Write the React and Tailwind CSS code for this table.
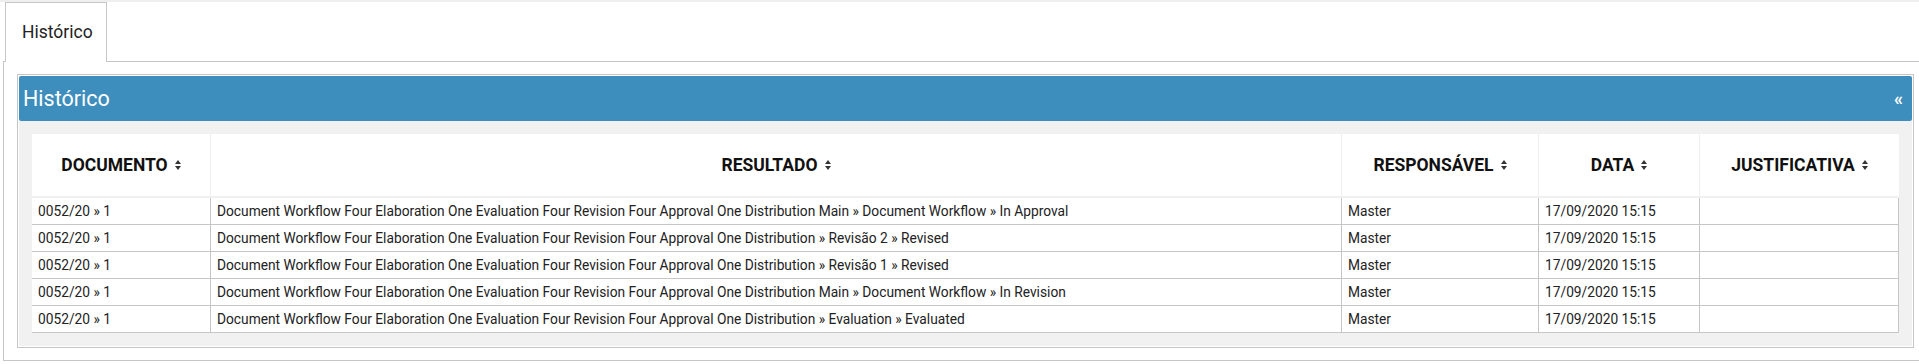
import React from 'react';

const BASE = 'Document Workflow Four Elaboration One Evaluation Four Revision Four Approval One Distribution';

const rows = [
  { doc: '0052/20 » 1', result: `${BASE} Main » Document Workflow » In Approval` },
  { doc: '0052/20 » 1', result: `${BASE} » Revisão 2 » Revised` },
  { doc: '0052/20 » 1', result: `${BASE} » Revisão 1 » Revised` },
  { doc: '0052/20 » 1', result: `${BASE} Main » Document Workflow » In Revision` },
  { doc: '0052/20 » 1', result: `${BASE} » Evaluation » Evaluated` },
];

const columns = ['DOCUMENTO', 'RESULTADO', 'RESPONSÁVEL', 'DATA', 'JUSTIFICATIVA'];

const gridCols = 'grid grid-cols-[179px_1131px_197px_161px_199px]';

const SortIcon = () => (
  <svg width="6" height="10" viewBox="0 0 6 10" className="ml-[7px] shrink-0">
    <path d="M3 0L6 4H0Z" fill="#333" />
    <path d="M0 6H6L3 10Z" fill="#333" />
  </svg>
);

const App = () => {
  return (
    <div className="w-[1919px] h-[364px] overflow-hidden bg-white font-['Roboto',sans-serif]">
      <div className="h-[2px] bg-[#efefef]" />

      <div className="ml-[3px] w-[1925px]">
        {/* tabs */}
        <div className="flex h-[60px] border-b border-[#c6c6c6]">
          <div className="ml-[2px] flex h-[60px] w-[102px] items-center border border-b-0 border-[#c6c6c6] bg-white pl-[16px] text-[17.5px] text-[#222]">
            Histórico
          </div>
        </div>

        {/* tab content */}
        <div className="border-x border-b border-[#c6c6c6] px-[13px] py-[12px]">
          <div className="border border-[#c6c6c6] bg-white p-px">
            <div className="flex h-[45px] items-center justify-between rounded-[2px] bg-[#3d8dbd] pl-[4px] pr-[9px] text-white">
              <span className="text-[21.5px] leading-none">Histórico</span>
              <span className="text-[18px] font-bold leading-none">«</span>
            </div>

            <div className="bg-[#f1f1f1] p-[13px]">
              <div className="bg-white">
                <div className={`${gridCols} h-[64px] border-b-2 border-[#f0f0f0]`}>
                  {columns.map((col, i) => (
                    <div
                      key={col}
                      className={`flex items-center justify-center text-[17.5px] font-bold text-[#111] ${i < columns.length - 1 ? 'border-r border-[#eeeeee]' : ''}`}
                    >
                      {col}
                      <SortIcon />
                    </div>
                  ))}
                </div>

                {rows.map((row, idx) => (
                  <div key={idx} className={`${gridCols} h-[27px] border-b border-[#c6c6c6] text-[13.75px] text-[#222]`}>
                    <div className="flex items-center border-r border-[#c6c6c6] px-[6px]">{row.doc}</div>
                    <div className="flex items-center border-r border-[#c6c6c6] px-[6px] whitespace-nowrap">{row.result}</div>
                    <div className="flex items-center border-r border-[#c6c6c6] px-[6px]">Master</div>
                    <div className="flex items-center border-r border-[#c6c6c6] px-[6px]">17/09/2020 15:15</div>
                    <div className="border-r border-[#c6c6c6]" />
                  </div>
                ))}
              </div>
            </div>
          </div>
        </div>
      </div>
    </div>
  );
};

export default App;
